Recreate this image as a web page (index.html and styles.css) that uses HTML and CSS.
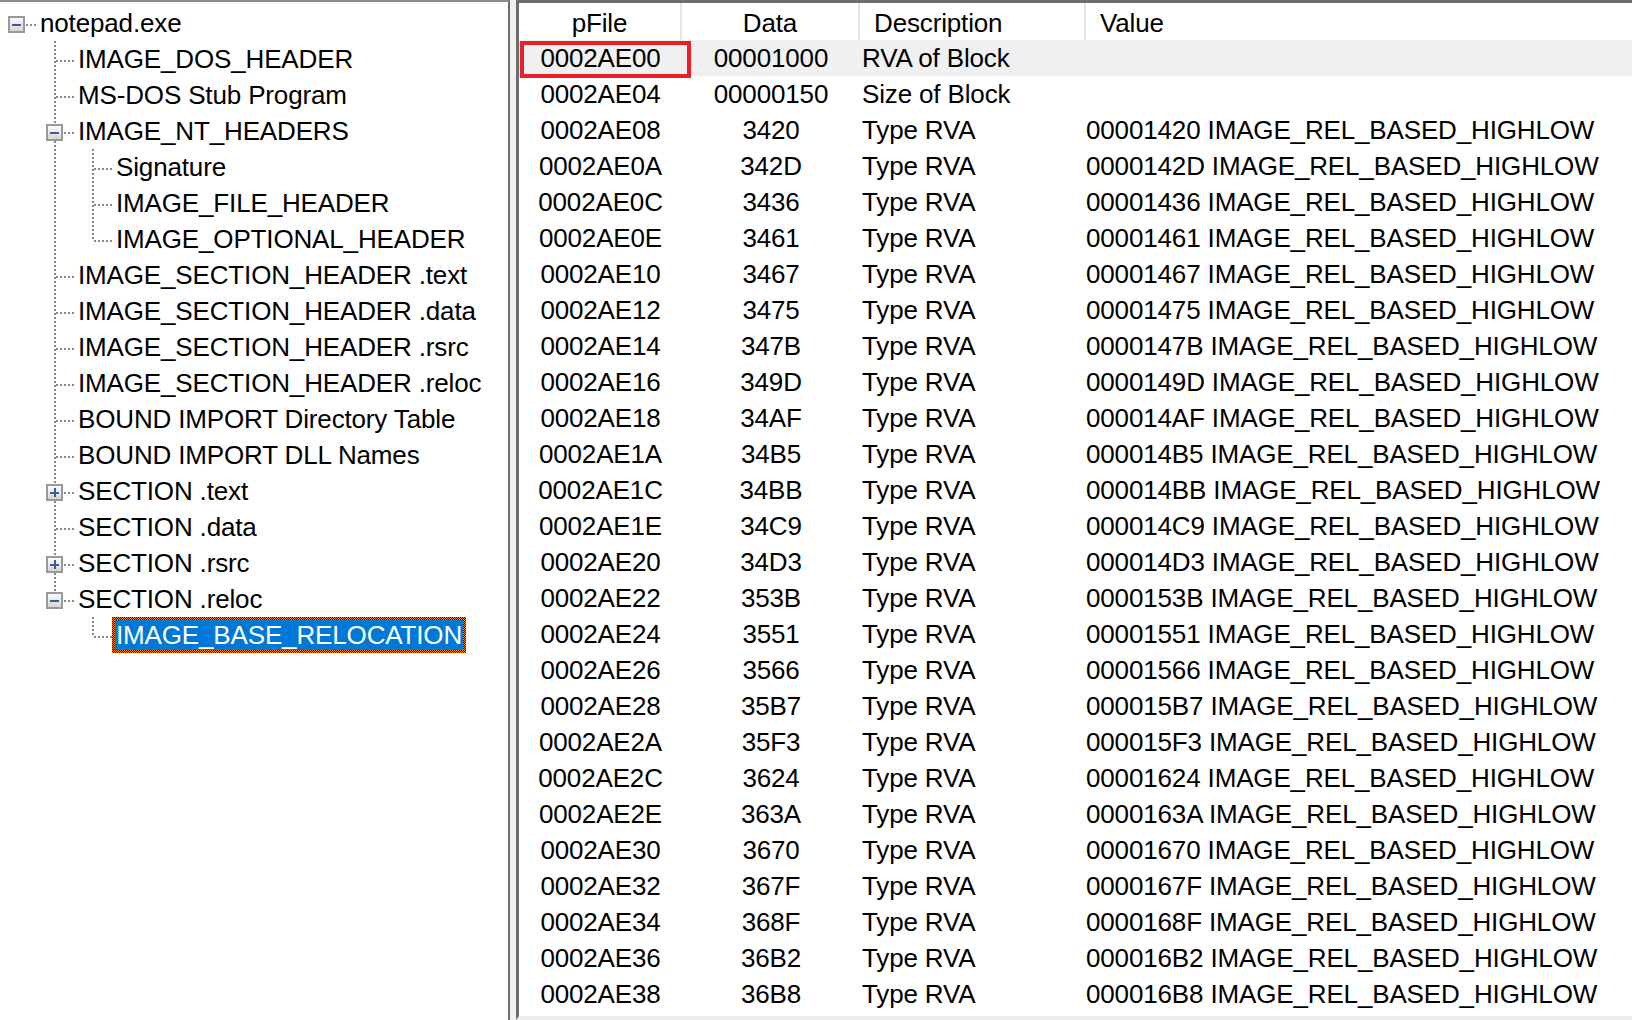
FILE: index.html
```html
<!DOCTYPE html>
<html lang="en">

<head>
  <meta charset="UTF-8">
  <title>notepad.exe - PE view</title>
  <link rel="stylesheet" href="styles.css">
</head>

<body>

  <div class="tree">
    <div class="node"><span class="cell rootline"><span class="box minus"></span></span><span class="label">notepad.exe</span></div>
    <div class="node"><span class="cell"></span><span class="cell tee"></span><span class="label">IMAGE_DOS_HEADER</span></div>
    <div class="node"><span class="cell"></span><span class="cell tee"></span><span class="label">MS-DOS Stub Program</span></div>
    <div class="node"><span class="cell"></span><span class="cell tee"><span class="box minus"></span></span><span class="label">IMAGE_NT_HEADERS</span></div>
    <div class="node"><span class="cell"></span><span class="cell pipe"></span><span class="cell tee"></span><span class="label">Signature</span></div>
    <div class="node"><span class="cell"></span><span class="cell pipe"></span><span class="cell tee"></span><span class="label">IMAGE_FILE_HEADER</span></div>
    <div class="node"><span class="cell"></span><span class="cell pipe"></span><span class="cell elbow"></span><span class="label">IMAGE_OPTIONAL_HEADER</span></div>
    <div class="node"><span class="cell"></span><span class="cell tee"></span><span class="label">IMAGE_SECTION_HEADER .text</span></div>
    <div class="node"><span class="cell"></span><span class="cell tee"></span><span class="label">IMAGE_SECTION_HEADER .data</span></div>
    <div class="node"><span class="cell"></span><span class="cell tee"></span><span class="label">IMAGE_SECTION_HEADER .rsrc</span></div>
    <div class="node"><span class="cell"></span><span class="cell tee"></span><span class="label">IMAGE_SECTION_HEADER .reloc</span></div>
    <div class="node"><span class="cell"></span><span class="cell tee"></span><span class="label">BOUND IMPORT Directory Table</span></div>
    <div class="node"><span class="cell"></span><span class="cell tee"></span><span class="label">BOUND IMPORT DLL Names</span></div>
    <div class="node"><span class="cell"></span><span class="cell tee"><span class="box plus"></span></span><span class="label">SECTION .text</span></div>
    <div class="node"><span class="cell"></span><span class="cell tee"></span><span class="label">SECTION .data</span></div>
    <div class="node"><span class="cell"></span><span class="cell tee"><span class="box plus"></span></span><span class="label">SECTION .rsrc</span></div>
    <div class="node"><span class="cell"></span><span class="cell elbow"><span class="box minus"></span></span><span class="label">SECTION .reloc</span></div>
    <div class="node"><span class="cell"></span><span class="cell"></span><span class="cell elbow"></span><span class="label selected">IMAGE_BASE_RELOCATION</span></div>
  </div>

  <div class="list">
    <div class="head">
      <div class="c1">pFile</div>
      <div class="c2">Data</div>
      <div class="c3">Description</div>
      <div class="c4">Value</div>
    </div>
    <div class="row hot">
      <div class="c1">0002AE00<span class="mark"></span></div>
      <div class="c2">00001000</div>
      <div class="c3">RVA of Block</div>
      <div class="c4"></div>
    </div>
    <div class="row">
      <div class="c1">0002AE04</div>
      <div class="c2">00000150</div>
      <div class="c3">Size of Block</div>
      <div class="c4"></div>
    </div>
    <div class="row"><div class="c1">0002AE08</div><div class="c2">3420</div><div class="c3">Type RVA</div><div class="c4">00001420 IMAGE_REL_BASED_HIGHLOW</div></div>
    <div class="row"><div class="c1">0002AE0A</div><div class="c2">342D</div><div class="c3">Type RVA</div><div class="c4">0000142D IMAGE_REL_BASED_HIGHLOW</div></div>
    <div class="row"><div class="c1">0002AE0C</div><div class="c2">3436</div><div class="c3">Type RVA</div><div class="c4">00001436 IMAGE_REL_BASED_HIGHLOW</div></div>
    <div class="row"><div class="c1">0002AE0E</div><div class="c2">3461</div><div class="c3">Type RVA</div><div class="c4">00001461 IMAGE_REL_BASED_HIGHLOW</div></div>
    <div class="row"><div class="c1">0002AE10</div><div class="c2">3467</div><div class="c3">Type RVA</div><div class="c4">00001467 IMAGE_REL_BASED_HIGHLOW</div></div>
    <div class="row"><div class="c1">0002AE12</div><div class="c2">3475</div><div class="c3">Type RVA</div><div class="c4">00001475 IMAGE_REL_BASED_HIGHLOW</div></div>
    <div class="row"><div class="c1">0002AE14</div><div class="c2">347B</div><div class="c3">Type RVA</div><div class="c4">0000147B IMAGE_REL_BASED_HIGHLOW</div></div>
    <div class="row"><div class="c1">0002AE16</div><div class="c2">349D</div><div class="c3">Type RVA</div><div class="c4">0000149D IMAGE_REL_BASED_HIGHLOW</div></div>
    <div class="row"><div class="c1">0002AE18</div><div class="c2">34AF</div><div class="c3">Type RVA</div><div class="c4">000014AF IMAGE_REL_BASED_HIGHLOW</div></div>
    <div class="row"><div class="c1">0002AE1A</div><div class="c2">34B5</div><div class="c3">Type RVA</div><div class="c4">000014B5 IMAGE_REL_BASED_HIGHLOW</div></div>
    <div class="row"><div class="c1">0002AE1C</div><div class="c2">34BB</div><div class="c3">Type RVA</div><div class="c4">000014BB IMAGE_REL_BASED_HIGHLOW</div></div>
    <div class="row"><div class="c1">0002AE1E</div><div class="c2">34C9</div><div class="c3">Type RVA</div><div class="c4">000014C9 IMAGE_REL_BASED_HIGHLOW</div></div>
    <div class="row"><div class="c1">0002AE20</div><div class="c2">34D3</div><div class="c3">Type RVA</div><div class="c4">000014D3 IMAGE_REL_BASED_HIGHLOW</div></div>
    <div class="row"><div class="c1">0002AE22</div><div class="c2">353B</div><div class="c3">Type RVA</div><div class="c4">0000153B IMAGE_REL_BASED_HIGHLOW</div></div>
    <div class="row"><div class="c1">0002AE24</div><div class="c2">3551</div><div class="c3">Type RVA</div><div class="c4">00001551 IMAGE_REL_BASED_HIGHLOW</div></div>
    <div class="row"><div class="c1">0002AE26</div><div class="c2">3566</div><div class="c3">Type RVA</div><div class="c4">00001566 IMAGE_REL_BASED_HIGHLOW</div></div>
    <div class="row"><div class="c1">0002AE28</div><div class="c2">35B7</div><div class="c3">Type RVA</div><div class="c4">000015B7 IMAGE_REL_BASED_HIGHLOW</div></div>
    <div class="row"><div class="c1">0002AE2A</div><div class="c2">35F3</div><div class="c3">Type RVA</div><div class="c4">000015F3 IMAGE_REL_BASED_HIGHLOW</div></div>
    <div class="row"><div class="c1">0002AE2C</div><div class="c2">3624</div><div class="c3">Type RVA</div><div class="c4">00001624 IMAGE_REL_BASED_HIGHLOW</div></div>
    <div class="row"><div class="c1">0002AE2E</div><div class="c2">363A</div><div class="c3">Type RVA</div><div class="c4">0000163A IMAGE_REL_BASED_HIGHLOW</div></div>
    <div class="row"><div class="c1">0002AE30</div><div class="c2">3670</div><div class="c3">Type RVA</div><div class="c4">00001670 IMAGE_REL_BASED_HIGHLOW</div></div>
    <div class="row"><div class="c1">0002AE32</div><div class="c2">367F</div><div class="c3">Type RVA</div><div class="c4">0000167F IMAGE_REL_BASED_HIGHLOW</div></div>
    <div class="row"><div class="c1">0002AE34</div><div class="c2">368F</div><div class="c3">Type RVA</div><div class="c4">0000168F IMAGE_REL_BASED_HIGHLOW</div></div>
    <div class="row"><div class="c1">0002AE36</div><div class="c2">36B2</div><div class="c3">Type RVA</div><div class="c4">000016B2 IMAGE_REL_BASED_HIGHLOW</div></div>
    <div class="row"><div class="c1">0002AE38</div><div class="c2">36B8</div><div class="c3">Type RVA</div><div class="c4">000016B8 IMAGE_REL_BASED_HIGHLOW</div></div>
  </div>

</body>

</html>
```

FILE: styles.css
```css
* {
  box-sizing: border-box;
}

body {
  margin: 0;
  height: 1020px;
  overflow: hidden;
  display: flex;
  background: #f0f0f0;
  font-family: "Liberation Sans", Arial, sans-serif;
  font-size: 26px;
  letter-spacing: -0.15px;
  color: #000;
}

/* left pane: tree view */

.tree {
  flex: none;
  width: 510px;
  background: #fff;
  border-top: 2px solid #8c8c8c;
  border-right: 2px solid #6e6e6e;
  padding-top: 3px;
}

.node {
  display: flex;
  align-items: center;
  height: 36px;
  white-space: nowrap;
}

.cell {
  flex: none;
  display: flex;
  width: 38px;
  height: 36px;
}

.pipe {
  background: repeating-linear-gradient(#888 0 2px, transparent 2px 4px) 16px 0 / 2px 100% no-repeat;
}

.tee {
  background:
    repeating-linear-gradient(#888 0 2px, transparent 2px 4px) 16px 0 / 2px 100% no-repeat,
    repeating-linear-gradient(90deg, transparent 0 2px, #888 2px 4px) 16px 19px / 22px 2px no-repeat;
}

.elbow {
  background:
    repeating-linear-gradient(#888 0 2px, transparent 2px 4px) 16px 0 / 2px 20px no-repeat,
    repeating-linear-gradient(90deg, transparent 0 2px, #888 2px 4px) 16px 19px / 22px 2px no-repeat;
}

.rootline {
  background: repeating-linear-gradient(90deg, transparent 0 2px, #888 2px 4px) 24px 19px / 12px 2px no-repeat;
}

.box {
  width: 17px;
  height: 17px;
  margin: 11px 0 0 8px;
  border: 2px solid #999;
  background: linear-gradient(#fbfbfb, #d6d6d6);
}

.box.minus {
  background:
    linear-gradient(#3d5a9c, #3d5a9c) center / 9px 2px no-repeat,
    linear-gradient(#fbfbfb, #d6d6d6);
}

.box.plus {
  background:
    linear-gradient(#3d5a9c, #3d5a9c) center / 9px 2px no-repeat,
    linear-gradient(#3d5a9c, #3d5a9c) center / 2px 9px no-repeat,
    linear-gradient(#fbfbfb, #d6d6d6);
}

.label {
  margin-left: -2px;
  padding: 0 1px;
  border: 3px solid transparent;
  line-height: 30px;
}

.label.selected {
  color: #fff;
  background:
    linear-gradient(#0078d7, #0078d7) padding-box,
    repeating-conic-gradient(#ff8a00 0 25%, #111 0 50%) 0 0 / 2px 2px border-box;
}

/* right pane: list view */

.list {
  flex: 1;
  margin-left: 6px;
  background: #fff;
  border-top: 3px solid #6d6d6d;
  border-left: 3px solid #6d6d6d;
  border-bottom: 4px solid #ececec;
  overflow: hidden;
}

.head,
.row {
  display: grid;
  grid-template-columns: 163px 178px 226px 1fr;
  white-space: nowrap;
}

.head {
  height: 37px;
}

.head > div {
  padding-top: 4px;
  line-height: 33px;
  border-right: 2px solid #e5e5e5;
}

.head > div:last-child {
  border-right: none;
}

.row {
  height: 36px;
  line-height: 36px;
}

.row.hot {
  background: #f0f0f0;
}

.c1,
.c2 {
  text-align: center;
}

.row .c1 {
  position: relative;
}

.c3 {
  padding-left: 2px;
}

.head .c3,
.head .c4 {
  padding-left: 14px;
}

.mark {
  position: absolute;
  left: 1px;
  top: 1px;
  width: 171px;
  height: 37px;
  border: 4px solid #e8202a;
}
```
